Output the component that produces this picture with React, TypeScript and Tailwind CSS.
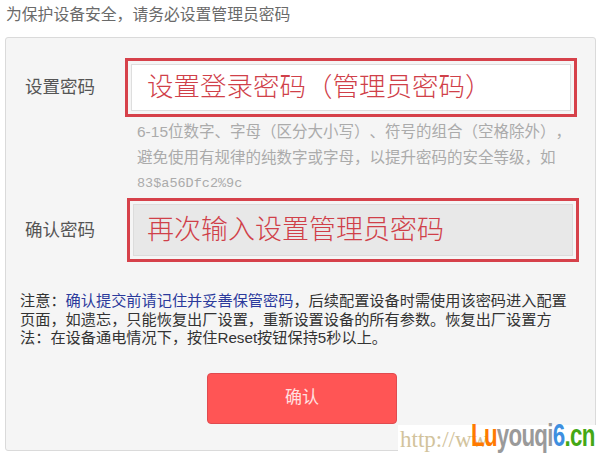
const cjk = "font-['Liberation_Sans','Noto_Sans_CJK_SC',sans-serif]";

export default function App() {
  return (
    <div className={`relative w-[600px] h-[455px] bg-white overflow-hidden [text-spacing-trim:space-all] ${cjk}`}>
      {/* TITLE */}
      <p className="pl-[6px] pt-[4px] h-[37px] text-[15.8px] leading-[22px] text-[#6a6a6a]">
        为保护设备安全，请务必设置管理员密码
      </p>

      {/* CARD */}
      <div className="ml-[5px] w-[591px] h-[414px] rounded-[3px] border border-[#dadada] bg-[#f5f5f5] pt-[20px] pl-[19px]">
        {/* PASSWORD */}
        <div className="flex items-center">
          <span className="w-[100px] text-[17.5px] text-[#555]">设置密码</span>
          <div className="w-[452px] h-[59px] border-[3px] border-[#d6414a] p-[3px]">
            <div className="h-full border border-[#dedede] bg-white pl-[15px] flex items-center">
              <span className="text-[26.5px] leading-none font-light text-[#d04049]">设置登录密码（管理员密码）</span>
            </div>
          </div>
        </div>

        {/* HINT */}
        <div className="ml-[112px] mt-[2px] text-[15.5px] leading-[26px] text-[#ababab]">
          <p>6-15位数字、字母（区分大小写）、符号的组合（空格除外），</p>
          <p>避免使用有规律的纯数字或字母，以提升密码的安全等级，如</p>
          <p className="font-['Liberation_Mono',monospace] text-[13.5px]">83$a56Dfc2%9c</p>
        </div>

        {/* CONFIRM */}
        <div className="flex items-center mt-[1px]">
          <span className="w-[102px] text-[17.5px] text-[#555]">确认密码</span>
          <div className="w-[452px] h-[64px] border-[3px] border-[#d6414a] p-[3px]">
            <div className="h-full border border-[#dcdcdc] bg-[#e8e8e8] pl-[13px] flex items-center">
              <span className="text-[27px] leading-none font-light text-[#d04049]">再次输入设置管理员密码</span>
            </div>
          </div>
        </div>

        {/* NOTE */}
        <div className="-ml-[5px] mt-[30px] text-[15.2px] leading-[18.5px] text-[#333]">
          <p>
            注意：<span className="text-[#2b3a9c]">确认提交前请记住并妥善保管密码</span>，后续配置设备时需使用该密码进入配置
          </p>
          <p>页面，如遗忘，只能恢复出厂设置，重新设置设备的所有参数。恢复出厂设置方</p>
          <p>法：在设备通电情况下，按住Reset按钮保持5秒以上。</p>
        </div>

        {/* BUTTON */}
        <button
          type="button"
          className="ml-[182px] mt-[25px] w-[190px] h-[51px] rounded-[4px] border border-[#e04a4f] bg-[#ff5555] text-[17px] text-[#ffe0e0]"
        >
          确认
        </button>
      </div>

      {/* WATERMARK */}
      <div className="absolute left-[398px] top-[425px] w-[202px] h-[30px] bg-white">
        <span className="absolute left-[2px] top-[2px] font-['Liberation_Serif',serif] text-[23px] leading-[26px] text-[#d2c39c]">
          http://ww
        </span>
        <span className="absolute left-[73px] -top-[5px] inline-block origin-left scale-x-[0.72] whitespace-nowrap font-['Liberation_Sans',sans-serif] font-bold text-[31px] leading-[31px] tracking-[-1px]">
          <span className="text-[#ff7a00]">Lu</span>
          <span className="text-[#9a9a9a]">youqi</span>
          <span className="text-[#3d8fe0]">6</span>
          <span className="text-[#44a815]">.cn</span>
        </span>
      </div>
    </div>
  );
}
